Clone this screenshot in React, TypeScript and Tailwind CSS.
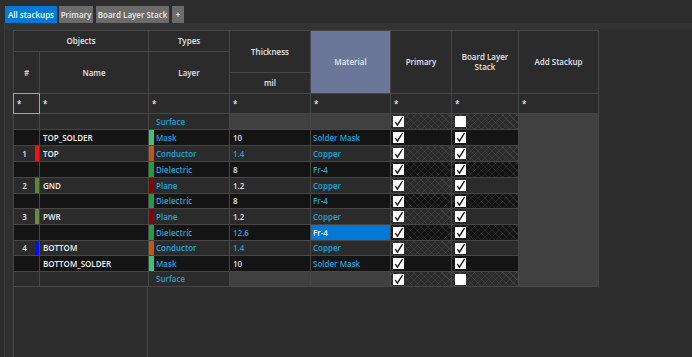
import React from 'react'

type Row = {
  num?: string
  bar?: string
  name?: string
  layer: string
  swatch?: string
  thick?: string
  thickCyan?: boolean
  mat?: string
  selected?: boolean
  surface?: boolean
  dark?: boolean
  pHatch: boolean
  bHatch: boolean
  bCheck: boolean
}

const rows: Row[] = [
  { layer: 'Surface', surface: true, pHatch: true, bHatch: true, bCheck: false },
  { name: 'TOP_SOLDER', layer: 'Mask', swatch: '#3dc27a', thick: '10', mat: 'Solder Mask', dark: true, pHatch: false, bHatch: false, bCheck: true },
  { num: '1', bar: '#ff1010', name: 'TOP', layer: 'Conductor', swatch: '#c4561a', thick: '1.4', thickCyan: true, mat: 'Copper', pHatch: true, bHatch: true, bCheck: true },
  { layer: 'Dielectric', swatch: '#1f9e3e', thick: '8', mat: 'Fr-4', dark: true, pHatch: true, bHatch: true, bCheck: true },
  { num: '2', bar: '#5a8a38', name: 'GND', layer: 'Plane', swatch: '#8c0000', thick: '1.2', mat: 'Copper', pHatch: true, bHatch: false, bCheck: true },
  { layer: 'Dielectric', swatch: '#1f9e3e', thick: '8', mat: 'Fr-4', dark: true, pHatch: true, bHatch: true, bCheck: true },
  { num: '3', bar: '#6a8c38', name: 'PWR', layer: 'Plane', swatch: '#8c0000', thick: '1.2', mat: 'Copper', pHatch: true, bHatch: false, bCheck: true },
  { layer: 'Dielectric', swatch: '#1f9e3e', thick: '12.6', thickCyan: true, mat: 'Fr-4', selected: true, dark: true, pHatch: true, bHatch: true, bCheck: true },
  { num: '4', bar: '#0010ff', name: 'BOTTOM', layer: 'Conductor', swatch: '#c4561a', thick: '1.4', thickCyan: true, mat: 'Copper', pHatch: true, bHatch: false, bCheck: true },
  { name: 'BOTTOM_SOLDER', layer: 'Mask', swatch: '#3dc27a', thick: '10', mat: 'Solder Mask', dark: true, pHatch: false, bHatch: false, bCheck: true },
  { layer: 'Surface', surface: true, pHatch: true, bHatch: true, bCheck: false },
]

const hatch =
  'bg-[image:repeating-linear-gradient(45deg,rgba(255,255,255,0.08)_0_1px,transparent_1px_5px),repeating-linear-gradient(-45deg,rgba(255,255,255,0.08)_0_1px,transparent_1px_5px)]'

function Check({ checked }: { checked: boolean }) {
  return (
    <svg width="11" height="11" viewBox="0 0 11 11" className="block">
      <rect x="0" y="0" width="11" height="11" fill="#ffffff" />
      {checked && <path d="M2.3 6 L4.4 9.2 L9.6 0.8" fill="none" stroke="#111" strokeWidth="1.3" />}
    </svg>
  )
}

const head = 'bg-[#2b2b2b] flex items-center justify-center text-center leading-[10px] text-[#e2e6ee]'
const filt = 'bg-[#2b2b2b] flex items-center pl-[3px] text-[#e8e8e8]'

export default function App() {
  return (
    <div
      className="w-[692px] h-[357px] bg-[#2d2d2d] overflow-hidden flex flex-col"
      style={{ fontFamily: '"Open Sans", "Liberation Sans", sans-serif' }}
    >
      {/* tabs */}
      <div className="h-[23px] shrink-0 flex items-end pl-[5px] text-[8px] text-white">
        <div className="w-[52px] h-[17px] bg-[#0078d7] flex items-center justify-center font-semibold">All stackups</div>
        <div className="w-[34px] h-[17px] ml-[2px] bg-[#6b6b6b] flex items-center justify-center text-[#ececec] font-semibold">Primary</div>
        <div className="w-[73px] h-[17px] ml-[3px] bg-[#6b6b6b] flex items-center justify-center text-[#ececec] font-semibold">Board Layer Stack</div>
        <div className="w-[12px] h-[17px] ml-[3px] bg-[#6b6b6b] flex items-center justify-center text-[#ececec] font-semibold">+</div>
      </div>

      <div className="flex-1 flex flex-col bg-[#2d2d2d]">
        <div className="h-[7px] shrink-0 ml-[4px] bg-[#333333] border-l border-[#3c3c3c]" />
        <div className="flex-1 flex">
          <div className="w-[9px] ml-[4px] shrink-0 border-l border-[#3c3c3c] bg-[#303030]" />
          <div className="flex flex-col flex-1">
            <div
              className="grid w-[586px] gap-px bg-[#464646] border border-[#464646] text-[8px] font-semibold grid-cols-[25px_108px_80px_80px_79px_60px_66px_79px] grid-rows-[20px_20px_20px_19px_15px_15px_15px_15px_15px_14px_15px_15px_14px_15px_14px]"
            >
              {/* header */}
              <div className={`${head} col-span-2`}>Objects</div>
              <div className={head}>Types</div>
              <div className={`${head} row-span-2`}>Thickness</div>
              <div className={`${head} row-span-3 bg-[#6b7699]`}>Material</div>
              <div className={`${head} row-span-3`}>Primary</div>
              <div className={`${head} row-span-3`}>
                Board Layer
                <br />
                Stack
              </div>
              <div className={`${head} row-span-3`}>Add Stackup</div>
              <div className={`${head} row-span-2`}>#</div>
              <div className={`${head} row-span-2`}>Name</div>
              <div className={`${head} row-span-2`}>Layer</div>
              <div className={head}>mil</div>

              {/* filter row */}
              <div className={`${filt} relative z-10 outline outline-[#a3a3a3]`}>*</div>
              <div className={filt}>*</div>
              <div className={filt}>*</div>
              <div className={filt}>*</div>
              <div className={filt}>*</div>
              <div className={filt}>*</div>
              <div className={filt}>*</div>
              <div className={filt}>*</div>

              {/* add stackup column, one block */}
              <div className="col-start-8 row-start-5 row-span-11 bg-[#404040]" />

              {rows.map((r, i) => {
                const bg = r.dark ? 'bg-[#141414]' : 'bg-[#2b2b2b]'
                return (
                  <React.Fragment key={i}>
                    <div className={`${bg} flex`}>
                      <div className="flex-1 flex items-center justify-center text-[#e6e6e6]">{r.num}</div>
                      <div className="w-[4px]" style={{ background: r.bar ?? 'transparent' }} />
                    </div>
                    <div className={`${bg} flex items-center pl-[3px] text-[#f2f2f2]`}>{r.name}</div>
                    <div className={`${bg} flex items-stretch`}>
                      <div className="w-[5px] shrink-0" style={{ background: r.swatch ?? 'transparent' }} />
                      <div className="flex items-center pl-[2px] text-[#1aa3dc]">{r.layer}</div>
                    </div>
                    <div
                      className={`${r.surface ? 'bg-[#404040]' : bg} flex items-center pl-[3px] ${
                        r.thickCyan ? 'text-[#1aa3dc]' : 'text-[#e6e6e6]'
                      }`}
                    >
                      {r.thick}
                    </div>
                    <div
                      className={`${r.surface ? 'bg-[#404040]' : r.selected ? 'bg-[#0078d7]' : bg} flex items-center pl-[2px] ${
                        r.selected ? 'text-white' : 'text-[#1aa3dc]'
                      }`}
                    >
                      {r.mat}
                    </div>
                    <div className={`${bg} ${r.pHatch ? hatch : ''} flex items-center pl-[2px]`}>
                      <Check checked />
                    </div>
                    <div className={`${bg} ${r.bHatch ? hatch : ''} flex items-center pl-[3px]`}>
                      <Check checked={r.bCheck} />
                    </div>
                  </React.Fragment>
                )
              })}
            </div>
            {/* empty area under the grid */}
            <div className="flex-1 flex">
              <div className="w-[135px] border-l border-r border-[#464646]" />
            </div>
          </div>
        </div>
      </div>
    </div>
  )
}
